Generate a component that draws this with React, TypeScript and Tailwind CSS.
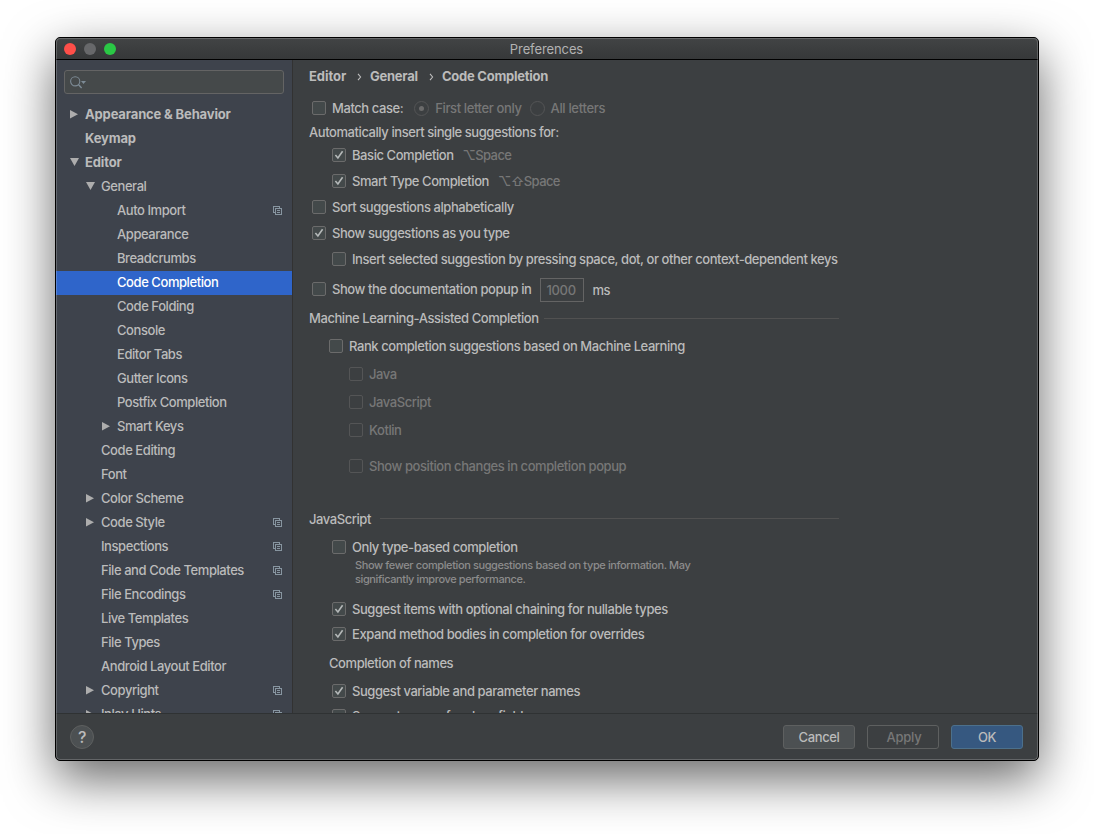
import type { ReactNode } from "react";
import { clsx } from "clsx";

type TreeItem = {
  label: string;
  level: number;
  arrow?: "open" | "closed";
  bold?: boolean;
  shared?: boolean;
  selected?: boolean;
};

const treeItems: TreeItem[] = [
  { label: "Appearance & Behavior", level: 0, arrow: "closed", bold: true },
  { label: "Keymap", level: 0, bold: true },
  { label: "Editor", level: 0, arrow: "open", bold: true },
  { label: "General", level: 1, arrow: "open" },
  { label: "Auto Import", level: 2, shared: true },
  { label: "Appearance", level: 2 },
  { label: "Breadcrumbs", level: 2 },
  { label: "Code Completion", level: 2, selected: true },
  { label: "Code Folding", level: 2 },
  { label: "Console", level: 2 },
  { label: "Editor Tabs", level: 2 },
  { label: "Gutter Icons", level: 2 },
  { label: "Postfix Completion", level: 2 },
  { label: "Smart Keys", level: 2, arrow: "closed" },
  { label: "Code Editing", level: 1 },
  { label: "Font", level: 1 },
  { label: "Color Scheme", level: 1, arrow: "closed" },
  { label: "Code Style", level: 1, arrow: "closed", shared: true },
  { label: "Inspections", level: 1, shared: true },
  { label: "File and Code Templates", level: 1, shared: true },
  { label: "File Encodings", level: 1, shared: true },
  { label: "Live Templates", level: 1 },
  { label: "File Types", level: 1 },
  { label: "Android Layout Editor", level: 1 },
  { label: "Copyright", level: 1, arrow: "closed", shared: true },
  { label: "Inlay Hints", level: 1, arrow: "closed", shared: true },
];

const indents = ["pl-3", "pl-7", "pl-11"];

function Arrow({ state }: { state?: "open" | "closed" }) {
  return (
    <svg width="17" height="12" viewBox="0 0 17 12" className="shrink-0" fill="#adadad">
      {state === "closed" && <path d="M2 1v8.6l8-4.3z" />}
      {state === "open" && <path d="M2 1h9l-4.5 8z" />}
    </svg>
  );
}

function SharedIcon() {
  return (
    <svg width="9" height="9" viewBox="0 0 9 9" fill="none" stroke="#8795a0" shapeRendering="crispEdges">
      <path d="M2 6.5H.5v-6h6V2" />
      <path d="M2.5 2.5h6v6h-6z" />
      <path d="M4 4.5h3M4 6.5h3" />
    </svg>
  );
}

function Sidebar() {
  return (
    <aside className="flex w-[237px] shrink-0 flex-col overflow-hidden border-r border-[#323232] bg-[#3e434c]">
      <div className="mx-2 mt-2.5 flex h-6 w-[220px] shrink-0 items-center rounded-[3px] border border-[#646464] bg-[#45494a] pl-[5px]">
        <svg width="17" height="13" viewBox="0 0 17 13" fill="none" stroke="#7d8b96">
          <circle cx="5.2" cy="5.3" r="4.6" strokeWidth="1.1" />
          <path d="M8.4 8.5l3.2 3.4" strokeWidth="1.4" />
          <path d="M11 5h5l-2.5 3z" fill="#7d8b96" stroke="none" />
        </svg>
      </div>
      <ul className="mt-[9px]">
        {treeItems.map((item) => (
          <li
            key={item.label}
            className={clsx(
              "flex h-6 items-center",
              indents[item.level],
              item.bold && "font-bold tracking-[-0.15px]",
              item.selected && "bg-[#2f65ca] text-white",
            )}
          >
            <Arrow state={item.arrow} />
            <span className="flex-1 whitespace-nowrap">{item.label}</span>
            {item.shared && (
              <span className="mr-[10px] pb-0.5">
                <SharedIcon />
              </span>
            )}
          </li>
        ))}
      </ul>
    </aside>
  );
}

function Check({
  label,
  checked,
  disabled,
  className,
  children,
}: {
  label: string;
  checked?: boolean;
  disabled?: boolean;
  className?: string;
  children?: ReactNode;
}) {
  return (
    <div className={clsx("flex h-5 items-center whitespace-nowrap", disabled && "text-[#777777]", className)}>
      <span
        className={clsx(
          "mr-1.5 flex size-3.5 shrink-0 items-center justify-center rounded-[2px] border",
          disabled ? "border-[#545556]" : "border-[#6b6b6b] bg-[#43494a]",
        )}
      >
        {checked && (
          <svg width="10" height="10" viewBox="0 0 10 10" fill="none" stroke="#b4b8b8" strokeWidth="1.6">
            <path d="M1.4 5l2.5 2.9L8.6 1.2" />
          </svg>
        )}
      </span>
      <span className="pt-0.5">{label}</span>
      {children}
    </div>
  );
}

function Radio({ on }: { on?: boolean }) {
  return (
    <span className="flex size-[15px] shrink-0 items-center justify-center rounded-full border border-[#545556]">
      {on && <span className="size-[5px] rounded-full bg-[#6b6b6b]" />}
    </span>
  );
}

function Section({ title, className, lineClassName }: { title: string; className?: string; lineClassName?: string }) {
  return (
    <div className={clsx("flex h-5 w-[530px] items-center", className)}>
      <span className="pt-0.5">{title}</span>
      <span className={clsx("h-px flex-1 bg-[#515151]", lineClassName)} />
    </div>
  );
}

function Chevron() {
  return (
    <svg width="5" height="8" viewBox="0 0 5 8" fill="none" stroke="#bbbbbb" strokeWidth="1.1">
      <path d="M1 .8l2.6 3.2L1 7.2" />
    </svg>
  );
}

function Content() {
  return (
    <main className="flex-1 overflow-hidden pl-4 pt-[7px]">
      <div className="flex h-5 items-center font-bold tracking-[-0.25px]">
        <span className="w-12 tracking-[-0.05px]">Editor</span>
        <Chevron />
        <span className="ml-2 w-[59px]">General</span>
        <Chevron />
        <span className="ml-2">Code Completion</span>
      </div>

      <Check label="Match case:" className="ml-[3px] mt-[11px]">
        <span className="ml-[11px] flex items-center text-[#777777]">
          <Radio on />
          <span className="ml-1.5 mr-2 pt-0.5 tracking-[-0.38px]">First letter only</span>
          <Radio />
          <span className="ml-1.5 pt-0.5 tracking-[-0.33px]">All letters</span>
        </span>
      </Check>
      <div className="mt-1 h-5 leading-5">Automatically insert single suggestions for:</div>
      <Check label="Basic Completion" checked className="ml-[23px] mt-[3px]">
        <span className="ml-[9px] pt-0.5 tracking-[-0.6px] text-[#777777]">⌥Space</span>
      </Check>
      <Check label="Smart Type Completion" checked className="ml-[23px] mt-1.5">
        <span className="ml-[9px] pt-0.5 tracking-[-0.6px] text-[#777777]">⌥⇧Space</span>
      </Check>
      <Check label="Sort suggestions alphabetically" className="ml-[3px] mt-1.5" />
      <Check label="Show suggestions as you type" checked className="ml-[3px] mt-1.5" />
      <Check
        label="Insert selected suggestion by pressing space, dot, or other context-dependent keys"
        className="ml-[23px] mt-1.5"
      />
      <Check label="Show the documentation popup in" className="ml-[3px] mt-2.5">
        <span className="ml-[9px] mt-0.5 flex h-6 w-11 items-center border border-[#646464] pl-[5px] pt-0.5 tracking-[-0.3px] text-[#777777]">
          1000
        </span>
        <span className="ml-2 pt-1">ms</span>
      </Check>

      <Section title="Machine Learning-Assisted Completion" className="mt-[9px] gap-[5px]" />
      <Check label="Rank completion suggestions based on Machine Learning" className="ml-5 mt-2" />
      <Check label="Java" disabled className="ml-10 mt-2" />
      <Check label="JavaScript" disabled className="ml-10 mt-2" />
      <Check label="Kotlin" disabled className="ml-10 mt-2" />
      <Check label="Show position changes in completion popup" disabled className="ml-10 mt-4" />

      <Section title="JavaScript" className="mt-[33px] gap-[9px]" lineClassName="mb-0.5" />
      <Check label="Only type-based completion" className="ml-[23px] mt-2" />
      <p className="ml-[46px] mt-px w-[350px] text-[11px] leading-[14px] tracking-[-0.39px] text-[#8c8c8c]">
        Show fewer completion suggestions based on type information. May
        <br />
        significantly improve performance.
      </p>
      <Check
        label="Suggest items with optional chaining for nullable types"
        checked
        className="ml-[23px] mt-[13px]"
      />
      <Check label="Expand method bodies in completion for overrides" checked className="ml-[23px] mt-[5px]" />
      <div className="ml-5 mt-[9px] h-5 leading-5">Completion of names</div>
      <Check label="Suggest variable and parameter names" checked className="ml-[23px] mt-2" />
      <Check label="Suggest names for class fields" className="ml-[23px] mt-[5px]" />
    </main>
  );
}

function Footer() {
  return (
    <footer className="flex h-[47px] shrink-0 items-center gap-3 border-t border-[#2f3233] pl-3.5 pr-[15px]">
      <button className="mr-auto flex size-6 items-center justify-center rounded-full border border-[#5e6060] bg-[#4c5052] text-[16px] font-medium">
        ?
      </button>
      <button className="h-6 w-[72px] rounded-[3px] border border-[#5e6060] bg-[#4c5052] pt-0.5 tracking-[-0.35px]">
        Cancel
      </button>
      <button className="h-6 w-[72px] rounded-[3px] border border-[#5e6060] pl-0.5 pt-0.5 tracking-[-0.25px] text-[#777777]">
        Apply
      </button>
      <button className="h-6 w-[72px] rounded-[3px] border border-[#4c708c] bg-[#365880] pt-0.5">OK</button>
    </footer>
  );
}

export default function App() {
  return (
    <div className="h-[834px] w-[1094px] overflow-hidden bg-white pl-[55px] pt-[37px] font-['Inter','Liberation_Sans',sans-serif] text-[13px] font-medium tracking-[-0.43px] text-[#bbbbbb]">
      <div className="relative flex h-[724px] w-[984px] flex-col overflow-hidden rounded-[5px] border border-black bg-[#3c3f41] shadow-[0_18px_50px_rgba(0,0,0,0.6)]">
        {/* Title bar */}
        <header className="flex h-[22px] shrink-0 items-center border-b border-black bg-linear-to-b from-[#424445] to-[#363839] pl-2">
          <div className="flex w-[52px] gap-2">
            <span className="size-3 rounded-full bg-[#ff4f49]" />
            <span className="size-3 rounded-full bg-[#67686a]" />
            <span className="size-3 rounded-full bg-[#2ac845]" />
          </div>
          <h1 className="flex-1 pr-[61px] pt-0.5 text-center font-normal tracking-[-0.1px] text-[#b2b2b2]">
            Preferences
          </h1>
        </header>

        <div className="flex min-h-0 flex-1">
          <Sidebar />
          <Content />
        </div>
        <Footer />

        {/* Inner highlight of the window edge */}
        <div className="pointer-events-none absolute inset-0 rounded-[4px] border border-white/20" />
      </div>
    </div>
  );
}
